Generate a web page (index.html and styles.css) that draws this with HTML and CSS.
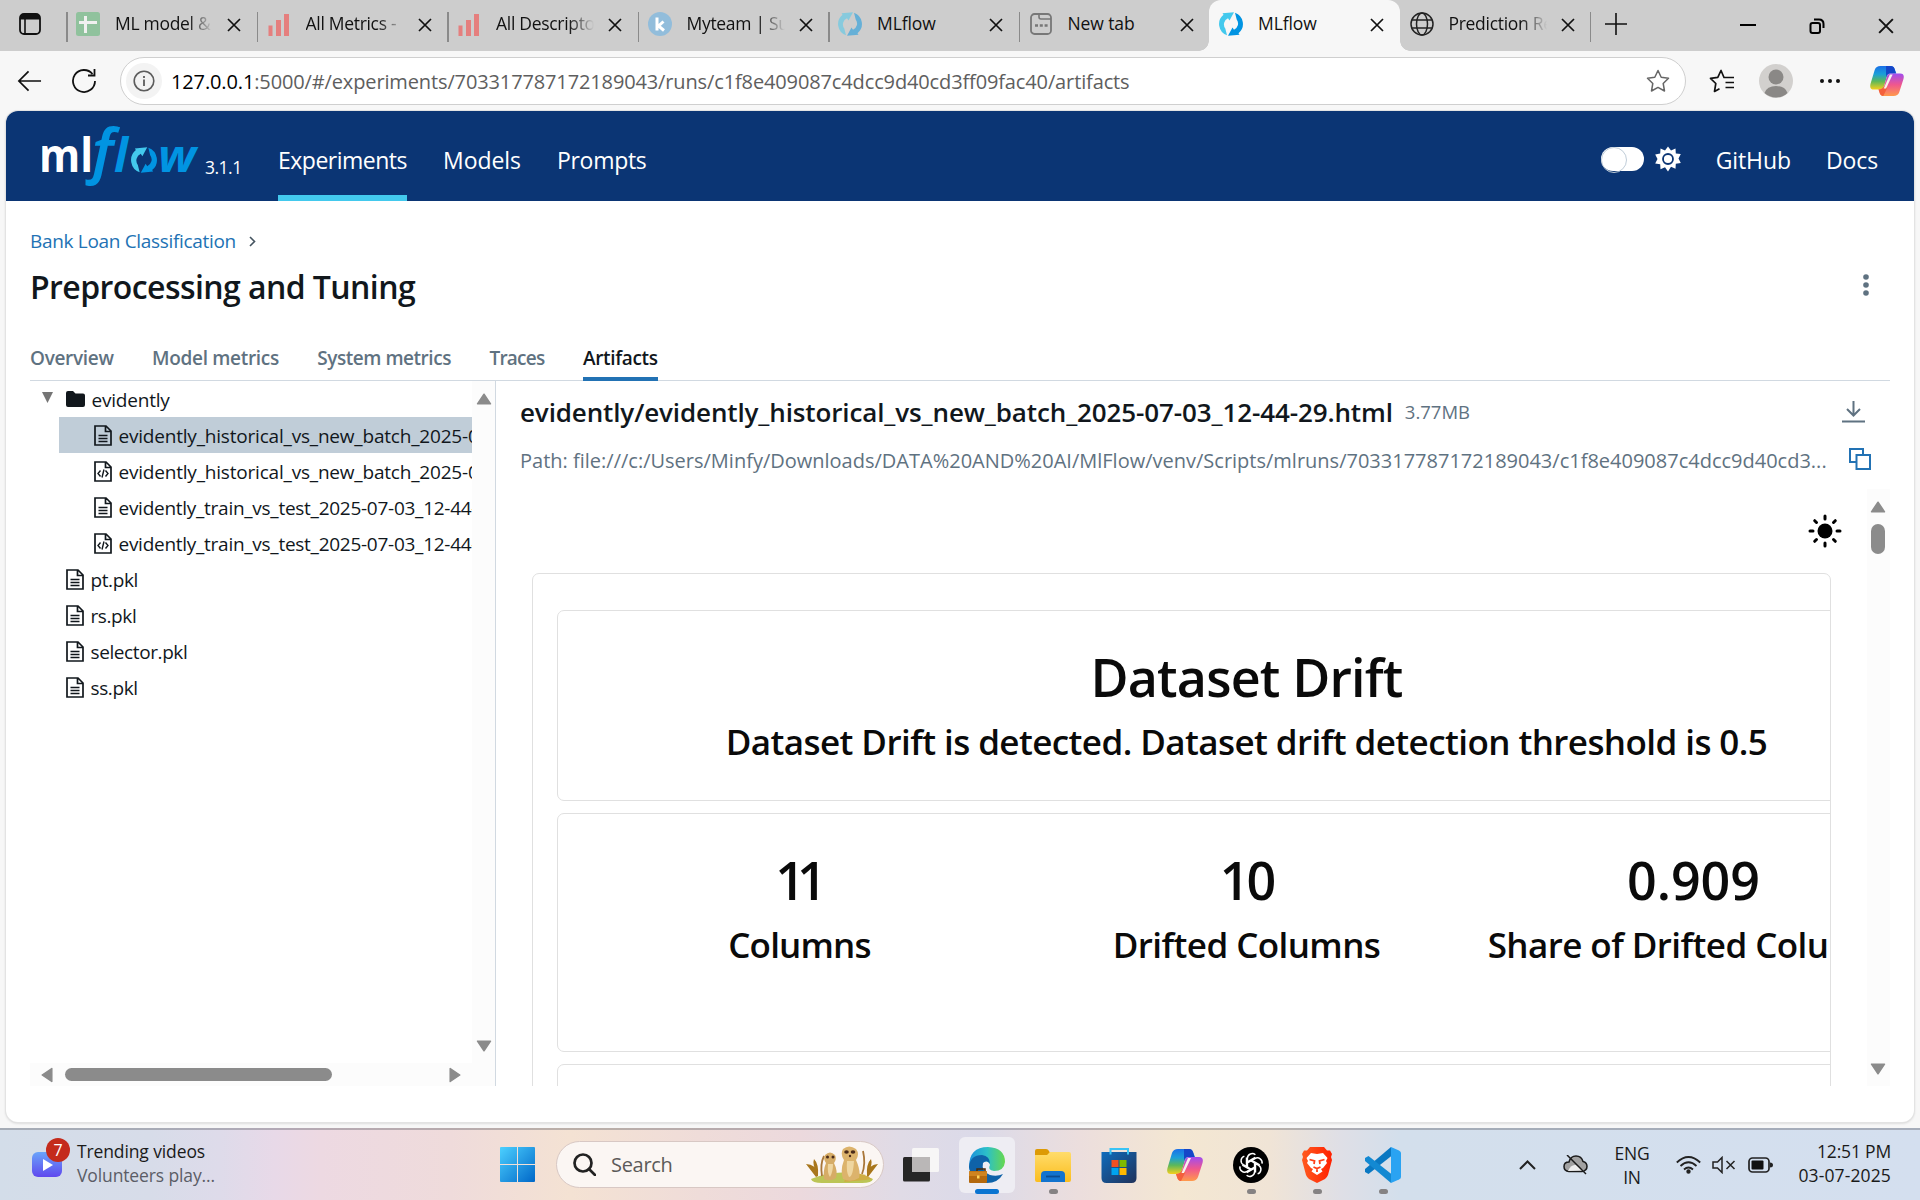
FILE: index.html
```html
<!DOCTYPE html>
<html lang="en">
<head>
<meta charset="utf-8">
<title>MLflow</title>
<link rel="stylesheet" href="styles.css">
</head>
<body>
<svg class="defs" width="0" height="0">
  <defs>
    <linearGradient id="g-cop1" x1="0" y1="0" x2="0" y2="1"><stop offset="0" stop-color="#1a6fe8"/><stop offset=".35" stop-color="#1b9fd8"/><stop offset=".65" stop-color="#5cb85a"/><stop offset="1" stop-color="#f5cf1c"/></linearGradient>
    <linearGradient id="g-cop2" x1="0" y1="0" x2="0" y2="1"><stop offset="0" stop-color="#a04cf0"/><stop offset=".5" stop-color="#f0578d"/><stop offset="1" stop-color="#ff9a4a"/></linearGradient>
    <linearGradient id="g-win" x1="0" y1="0" x2="1" y2="1"><stop offset="0" stop-color="#4cd0ff"/><stop offset="1" stop-color="#0067c8"/></linearGradient>
    <linearGradient id="g-fold" x1="0" y1="0" x2="0" y2="1"><stop offset="0" stop-color="#ffdc6b"/><stop offset="1" stop-color="#fbbd1e"/></linearGradient>
    <linearGradient id="g-edge" x1="0" y1="0" x2="1" y2="0"><stop offset="0" stop-color="#1b8fdc"/><stop offset=".5" stop-color="#2cc0c8"/><stop offset="1" stop-color="#66d84e"/></linearGradient>
    <linearGradient id="g-store" x1="0" y1="0" x2="1" y2="1"><stop offset="0" stop-color="#0f6cbd"/><stop offset="1" stop-color="#20325a"/></linearGradient>
    <linearGradient id="g-vid" x1="0" y1="0" x2="0" y2="1"><stop offset="0" stop-color="#6aa4fa"/><stop offset="1" stop-color="#5f48ee"/></linearGradient>
    <linearGradient id="g-brave" x1="0" y1="0" x2="1" y2="0"><stop offset="0" stop-color="#ff5a1f"/><stop offset="1" stop-color="#ff2000"/></linearGradient>
    <symbol id="x" viewBox="0 0 14 14"><path d="M1 1L13 13M13 1L1 13" stroke="#111" stroke-width="1.7" fill="none"/></symbol>
    <symbol id="bars" viewBox="0 0 24 24"><path d="M1.500 13.500h4V24h-4zM9 8h5v16H9zM17 2h5v22h-5z" fill="#e57f7e"/></symbol>
    <symbol id="ring" viewBox="0 0 24 24"><path d="M8 23.300A12 12 0 0 1 4.500 2.700L3.500 1.300L15 .2L10.500 8.500L9 6.300A6.700 6.700 0 0 0 6.300 16.500z" fill="#43c9ed"/><path d="M16 .7A12 12 0 0 1 19.500 21.300L20.500 22.700L9 23.800L13.500 15.500L15 17.700A6.700 6.700 0 0 0 17.700 7.500z" fill="#0194e2"/></symbol>
    <symbol id="doc" viewBox="0 0 18 21"><path d="M1 1h11l5 5v14H1zM11.500 1v5.500H17" fill="none" stroke="#11171c" stroke-width="1.700"/><path d="M4.500 10.500h9M4.500 13.500h9M4.500 16.500h9" stroke="#11171c" stroke-width="1.500"/></symbol>
    <symbol id="code" viewBox="0 0 18 21"><path d="M1 1h11l5 5v14H1zM11.500 1v5.500H17" fill="none" stroke="#11171c" stroke-width="1.700"/><path d="M6.500 9.500L4 12.500L6.500 15.500M11.500 9.500L14 12.500L11.500 15.500M10 8.500L8 16.500" fill="none" stroke="#11171c" stroke-width="1.400"/></symbol>
    <symbol id="tri" viewBox="0 0 16 12"><path d="M8 1.200L14.500 10.800H1.500z" fill="#8b8b8b" stroke="#8b8b8b" stroke-width="1.500" stroke-linejoin="round"/></symbol>
    <symbol id="copilot" viewBox="0 0 36 34"><path d="M11 1H22Q25 1 26 4L28 9H21Q19 9 18 12L15 22Q13.500 26 10 26H4Q-1 26 .5 20L5 5Q6.500 1 11 1z" fill="url(#g-cop1)"/><path d="M17 1H22Q25 1 26 4L27.500 9H21Q18 9 17 13z" fill="#1546c8"/><path d="M25 33H14Q11 33 10 29L9 26Q13.500 26 15 22L18 12Q19 9 22 9H32Q37 9 35.500 15L31 29Q29.500 33 25 33z" fill="url(#g-cop2)"/><path d="M9 26Q13.500 26 15 22L18.500 24L14 33Q11 33 10 29z" fill="#f4603c"/><path d="M21 10h3L17 25h-2.500z" fill="#f8f2ef"/></symbol>
  </defs>
</svg>

<header class="tabstrip">
  <div class="workspaces"><svg width="22" height="22" viewBox="0 0 22 22"><rect x="1" y="1" width="20" height="20" rx="4" fill="none" stroke="#111" stroke-width="1.800"/><path d="M1 6.500V5Q1 1 5 1H17Q21 1 21 5V6.500z" fill="#111"/><path d="M6 6v15" stroke="#111" stroke-width="1.600"/></svg></div>
  <div class="tab"><svg class="fav" viewBox="0 0 24 24"><rect width="24" height="24" rx="2.500" fill="#90c29d"/><path d="M9.500 4v17M3 10.500h18" stroke="#f0f0f0" stroke-width="3"/></svg><span class="tt">ML model &amp;</span><svg class="x"><use href="#x"/></svg></div>
  <div class="tab"><svg class="fav"><use href="#bars"/></svg><span class="tt">All Metrics -</span><svg class="x"><use href="#x"/></svg></div>
  <div class="tab"><svg class="fav"><use href="#bars"/></svg><span class="tt">All Descripto</span><svg class="x"><use href="#x"/></svg></div>
  <div class="tab"><svg class="fav" viewBox="0 0 24 24"><circle cx="12" cy="12" r="12" fill="#92bddb"/><path d="M9 5.500v13M15.500 9.500l-5 4.500l5.500 4.500" stroke="#fff" stroke-width="3" fill="none"/></svg><span class="tt">Myteam | Su</span><svg class="x"><use href="#x"/></svg></div>
  <div class="tab"><svg class="fav dim"><use href="#ring"/></svg><span class="tt full">MLflow</span><svg class="x"><use href="#x"/></svg></div>
  <div class="tab"><svg class="fav" viewBox="0 0 24 24"><rect x="2" y="2" width="20" height="20" rx="3.500" fill="none" stroke="#777" stroke-width="1.800"/><path d="M10 2v3q0 2 2 2h10" fill="none" stroke="#777" stroke-width="1.600"/><path d="M6 13.500h3M10.800 13.500h3M15.600 13.500h3" stroke="#777" stroke-width="2.500"/></svg><span class="tt full">New tab</span><svg class="x"><use href="#x"/></svg></div>
  <div class="tab active"><svg class="fav"><use href="#ring"/></svg><span class="tt full">MLflow</span><svg class="x"><use href="#x"/></svg></div>
  <div class="tab after"><svg class="fav" viewBox="0 0 24 24" fill="none" stroke="#222" stroke-width="1.500"><circle cx="12" cy="12" r="11"/><ellipse cx="12" cy="12" rx="5.500" ry="11"/><path d="M2 8h20M2 16h20"/></svg><span class="tt">Prediction Re</span><svg class="x"><use href="#x"/></svg></div>
  <div class="newtab"><svg width="22" height="22" viewBox="0 0 22 22"><path d="M11 0v22M0 11h22" stroke="#111" stroke-width="1.600"/></svg></div>
  <div class="wincontrols">
    <svg width="16" height="16" viewBox="0 0 16 16"><path d="M0 7h16" stroke="#000" stroke-width="2"/></svg>
    <svg width="16" height="16" viewBox="0 0 16 16" fill="none" stroke="#000" stroke-width="2"><rect x="1.500" y="5" width="9.500" height="10" rx="2"/><path d="M5 1.500h5q4.500 0 4.500 4.500v4"/></svg>
    <svg width="16" height="16" viewBox="0 0 14 14"><use href="#x"/></svg>
  </div>
</header>

<nav class="toolbar">
  <svg class="back" width="25" height="22" viewBox="0 0 26 22" fill="none" stroke="#111" stroke-width="1.800"><path d="M25 11H2M12 1L2 11l10 10"/></svg>
  <svg class="reload" width="26" height="26" viewBox="0 0 26 26" fill="none" stroke="#111" stroke-width="1.800"><path d="M21.500 6A11 11 0 1 0 24 13M23.500 1v6.500H17"/></svg>
  <div class="address">
    <span class="info"><svg width="22" height="22" viewBox="0 0 22 22"><circle cx="11" cy="11" r="9.800" fill="none" stroke="#5c5c5c" stroke-width="1.600"/><path d="M11 9.500v6.500M11 6v2" stroke="#5c5c5c" stroke-width="1.800"/></svg></span>
    <span class="url"><b>127.0.0.1</b>:5000/#/experiments/703317787172189043/runs/c1f8e409087c4dcc9d40cd3ff09fac40/artifacts</span>
    <svg class="star" width="24" height="24" viewBox="0 0 24 24"><path d="M12 1.500l3.200 6.800l7.300 1l-5.300 5.200l1.300 7.500L12 18.400L5.500 22l1.300-7.500L1.500 9.300l7.300-1z" fill="none" stroke="#666" stroke-width="1.500" stroke-linejoin="round"/></svg>
  </div>
  <svg class="favs" width="25" height="24" viewBox="0 0 25 24" fill="none" stroke="#111" stroke-width="1.700" stroke-linejoin="round"><path d="M17 8.500h-2L12 1.500L8.800 8.300l-7.300 1l5.300 5.200L5.500 22.500l5-2.700M14.500 8.500H25M16.500 13.500H25M16.500 18.500H25"/></svg>
  <svg class="avatar" width="34" height="34" viewBox="0 0 34 34"><circle cx="17" cy="17" r="17" fill="#d2d0ce"/><circle cx="17" cy="13" r="7.500" fill="#8a8886"/><path d="M5.500 29Q8 22 17 22T28.500 29A17 17 0 0 1 5.500 29z" fill="#8a8886"/></svg>
  <svg class="more" width="20" height="4" viewBox="0 0 20 4" fill="#111"><circle cx="2" cy="2" r="2"/><circle cx="10" cy="2" r="2"/><circle cx="18" cy="2" r="2"/></svg>
  <svg class="cop" width="34" height="32"><use href="#copilot"/></svg>
</nav>

<main class="page">
  <header class="appbar">
    <svg class="logo" width="158" height="64" viewBox="0 0 158 64">
      <text x="-3" y="49" class="lg-ml" textLength="54" lengthAdjust="spacingAndGlyphs">ml</text>
      <text x="50" y="49" class="lg-f">f</text>
      <text x="72" y="49" class="lg-l">l</text>
      <text x="116" y="49" class="lg-w" textLength="38" lengthAdjust="spacingAndGlyphs">w</text>
      <svg x="89" y="24" width="26" height="26"><use href="#ring"/></svg>
    </svg>
    <span class="version">3.1.1</span>
    <a class="nav on">Experiments</a><a class="nav n2">Models</a><a class="nav n3">Prompts</a>
    <span class="switch"></span>
    <svg class="gear" width="26" height="26" viewBox="0 0 26 26"><path d="M13 .5l3 4l4.500-2l.3 5l5 .5l-2.300 4.500l2.300 4.500l-5 .8l-.3 5l-4.500-2L13 25.500l-3-4.200l-4.500 2l-.3-5l-5-.8L2.500 13L.2 8.500l5-1l.3-5l4.500 2z" fill="#fff"/><circle cx="13" cy="13" r="5" fill="none" stroke="#0b3574" stroke-width="1.800"/></svg>
    <a class="nav r">GitHub</a><a class="nav r">Docs</a>
  </header>

  <div class="crumb"><a>Bank Loan Classification</a><svg width="7" height="11" viewBox="0 0 7 11"><path d="M1 1l4.500 4.500L1 10" fill="none" stroke="#44535f" stroke-width="1.600"/></svg></div>
  <div class="titlebar"><h1>Preprocessing and Tuning</h1>
    <svg width="6" height="22" viewBox="0 0 6 22" fill="#5f7281"><circle cx="3" cy="3" r="2.800"/><circle cx="3" cy="11" r="2.800"/><circle cx="3" cy="19" r="2.800"/></svg></div>
  <div class="tabs"><a>Overview</a><a>Model metrics</a><a class="sys">System metrics</a><a class="tr">Traces</a><a class="on">Artifacts</a></div>

  <div class="split">
    <aside class="tree">
      <div class="rows">
        <div class="row folder"><svg width="11" height="11" viewBox="0 0 11 11"><path d="M0 0h11L5.500 11z" fill="#757575"/></svg><svg class="fi" width="19" height="16" viewBox="0 0 19 16"><path d="M2 0h5l2.500 2.500H17q2 0 2 2V14q0 2-2 2H2q-2 0-2-2V2q0-2 2-2z" fill="#11171c"/></svg><span>evidently</span></div>
        <div class="row kid sel"><svg><use href="#doc"/></svg><span>evidently_historical_vs_new_batch_2025-07-03_12-44-29.html</span></div>
        <div class="row kid"><svg><use href="#code"/></svg><span>evidently_historical_vs_new_batch_2025-07-03_12-44-29.json</span></div>
        <div class="row kid t"><svg><use href="#doc"/></svg><span>evidently_train_vs_test_2025-07-03_12-44-29.html</span></div>
        <div class="row kid t"><svg><use href="#code"/></svg><span>evidently_train_vs_test_2025-07-03_12-44-29.json</span></div>
        <div class="row p"><svg><use href="#doc"/></svg><span>pt.pkl</span></div>
        <div class="row p"><svg><use href="#doc"/></svg><span>rs.pkl</span></div>
        <div class="row p"><svg><use href="#doc"/></svg><span>selector.pkl</span></div>
        <div class="row p"><svg><use href="#doc"/></svg><span>ss.pkl</span></div>
      </div>
      <div class="vbar"><svg><use href="#tri"/></svg><svg class="down"><use href="#tri"/></svg></div>
      <div class="hbar"><svg class="left"><use href="#tri"/></svg><i></i><svg class="right"><use href="#tri"/></svg></div>
    </aside>

    <section class="viewer">
      <div class="vhead"><h2>evidently/evidently_historical_vs_new_batch_2025-07-03_12-44-29.html</h2><span class="size">3.77MB</span>
        <svg width="23" height="22" viewBox="0 0 23 22" fill="none" stroke="#5f7281" stroke-width="2"><path d="M11.500 0v14M5 8l6.500 6.500L18 8M0 20.500h23"/></svg></div>
      <div class="vpath"><span>Path: file:///c:/Users/Minfy/Downloads/DATA%20AND%20AI/MlFlow/venv/Scripts/mlruns/703317787172189043/c1f8e409087c4dcc9d40cd3...</span>
        <svg width="22" height="22" viewBox="0 0 22 22" fill="none" stroke="#2272b4" stroke-width="2"><path d="M7 14H1V1h13v5"/><rect x="7.500" y="7" width="13.500" height="14"/></svg></div>
      <div class="frame">
        <div class="report">
          <svg class="sun" width="34" height="34" viewBox="0 0 34 34"><circle cx="17" cy="17" r="7.500" fill="#000"/><path d="M17 2v3M17 29v3M2 17h3M29 17h3M6.700 6.700l1.800 1.800M25.500 25.500l1.800 1.800M27.300 6.700l-1.800 1.800M8.500 25.500l-1.800 1.800" stroke="#000" stroke-width="3" stroke-linecap="round"/></svg>
          <div class="outer">
            <div class="card c1"><div class="big">Dataset Drift</div><div class="sub">Dataset Drift is detected. Dataset drift detection threshold is 0.5</div></div>
            <div class="card c2">
              <div><div class="big eleven">11</div><div class="sub cols">Columns</div></div>
              <div><div class="big ten">10</div><div class="sub">Drifted Columns</div></div>
              <div><div class="big num">0.909</div><div class="sub">Share of Drifted Columns</div></div>
            </div>
            <div class="card c3"></div>
          </div>
        </div>
        <div class="fbar"><svg><use href="#tri"/></svg><i></i><svg class="down"><use href="#tri"/></svg></div>
      </div>
    </section>
  </div>
</main>

<footer class="taskbar">
  <div class="widget"><svg width="40" height="52" viewBox="0 0 40 52"><rect x="0" y="19" width="30" height="25" rx="6" fill="url(#g-vid)"/><path d="M11 26v12l10-6z" fill="#fff"/><circle cx="26" cy="17" r="12" fill="#c42b1c"/><text x="26" y="23" class="badge">7</text></svg>
    <div><div class="w1">Trending videos</div><div class="w2">Volunteers play...</div></div></div>
  <svg class="win" width="35" height="35" viewBox="0 0 35 35"><path d="M0 1q0-1 1-1H17V17H0zM18 0H34q1 0 1 1V17H18zM0 18H17V35H1q-1 0-1-1zM18 18H35V34q0 1-1 1H18z" fill="url(#g-win)"/></svg>
  <div class="search"><svg width="23" height="23" viewBox="0 0 23 23" fill="none" stroke="#222" stroke-width="2.700"><circle cx="10" cy="10" r="8.500"/><path d="M16 16l6 6" stroke-linecap="round"/></svg><span>Search</span>
    <svg class="meer" width="72" height="38" viewBox="0 0 72 38"><path d="M5 33Q36 20 67 33Q66 37 56 37H16Q6 37 5 33z" fill="#bcc556"/><path d="M38 36Q60 34 66 33Q58 26 42 27z" fill="#cfae45"/><path d="M16 30Q14 18 18 10M56 28Q60 18 57 5" stroke="#a9773a" stroke-width="1.800" fill="none"/><path d="M18 33Q17 24 20 17Q17 13 19 9Q24 4 29 9Q31 13 28 17Q32 25 30 32Q24 36 18 33z" fill="#d6ac66"/><path d="M37 33Q34 24 38 14Q34 8 37 3Q43 -2 50 3Q54 8 50 14Q55 25 53 32Q45 37 37 33z" fill="#dcb36c"/><path d="M41 15Q40 26 43 31Q47 31 48 15zM22 18Q21 27 24 31Q27 26 27 18z" fill="#efd6a0"/><g fill="#4a2b1a"><ellipse cx="40.500" cy="6" rx="2.300" ry="1.700"/><ellipse cx="47" cy="6" rx="2.300" ry="1.700"/><circle cx="21.500" cy="11" r="1.500"/><circle cx="27" cy="11" r="1.500"/><circle cx="44" cy="10" r="1.200"/></g><path d="M10 31L0 18Q10 18 11 28Q6 18 8 13Q13 18 12 30M62 31L72 18Q63 18 62 28Q67 18 65 13Q60 18 61 30" fill="#a8761c"/></svg></div>
  <svg class="tv" width="36" height="34" viewBox="0 0 36 34"><rect y="9" width="27" height="24.500" rx="1.500" fill="#262626"/><rect x="9" y="0" width="27" height="24" rx="1.500" fill="#f7f6f6"/><rect x="9" y="9" width="18" height="15" fill="#bab7b7"/></svg>
  <div class="app edge"><svg width="36" height="36" viewBox="0 0 36 36"><path d="M0 20Q0 0 19 0Q36 1 36 15Q35 24 25 24Q18 23 21 18Q20 13 14 15Q8 20 18 29L18 36Q2 34 0 20z" fill="url(#g-edge)"/><path d="M0 20Q1 8 13 8Q21 9 21 17Q18 12 14 16Q12 24 21 28Q28 30 34 27Q29 36 18 36Q2 34 0 20z" fill="#0f62a8"/><path d="M8 24V22h8v2" stroke="#4a2a08" stroke-width="1.500" fill="none"/><rect y="24" width="18" height="12" rx="1" fill="#b4690e"/><path d="M0 24.500h18v4.500H0z" fill="#cf8420"/><rect x="8" y="28.500" width="2.500" height="3" fill="#ffd45a"/></svg><i class="wide"></i></div>
  <div class="app"><svg width="36" height="36" viewBox="0 0 36 36"><path d="M0 4q0-2 2-2h9q2 0 3 2l2 4H0z" fill="#dd9a05"/><path d="M0 8h12l3-3H34q2 0 2 2V33q0 2-2 2H2q-2 0-2-2z" fill="url(#g-fold)"/><path d="M6 35V28q0-4 4-4H26q4 0 4 4v7z" fill="#1273ce"/><path d="M11 29.500h14" stroke="#0b4c91" stroke-width="1.800"/></svg><i></i></div>
  <div class="app"><svg width="36" height="36" viewBox="0 0 36 36"><path d="M9.500 7V2H27v5" fill="none" stroke="#38c3f5" stroke-width="2"/><path d="M.5 5H35.500V31q0 5-5 5H5.500q-5 0-5-5z" fill="url(#g-store)"/><path d="M9.500 5v2.500M27 5v2.500" stroke="#38c3f5" stroke-width="2"/><path d="M10.500 13h7v7h-7z" fill="#f25022"/><path d="M18.500 13h7v7h-7z" fill="#7fba00"/><path d="M10.500 21h7v7h-7z" fill="#00a4ef"/><path d="M18.500 21h7v7h-7z" fill="#ffb900"/></svg></div>
  <div class="app"><svg width="36" height="34"><use href="#copilot"/></svg></div>
  <div class="app"><svg width="36" height="36" viewBox="0 0 36 36"><circle cx="18" cy="18" r="18" fill="#000"/><g transform="translate(18 18)" fill="none" stroke="#fff" stroke-width="1.500"><path id="pt" d="M-3.600 2.100V-6.800A4.800 4.800 0 0 1 4.400 -10.200M4.200 -7.600L-3.600 -3.100"/><use href="#pt" transform="rotate(60)"/><use href="#pt" transform="rotate(120)"/><use href="#pt" transform="rotate(180)"/><use href="#pt" transform="rotate(240)"/><use href="#pt" transform="rotate(300)"/></g></svg><i></i></div>
  <div class="app"><svg width="36" height="36" viewBox="0 0 36 36"><path d="M11 0h14l3 3.500h3l2 3.500l-1 3l1 3l-4 15q-1 2.500-3 4l-8 4l-8-4q-2-1.500-3-4L3 13l1-3l-1-3l2-3.500h3z" fill="url(#g-brave)"/><path d="M12 6l6 1l6-1l4.500 5l-1.500 3l1 2l-4 5l-2 1l1.500 2.500L18 28l-5.500-3.500L14 22l-2-1l-4-5l1-2l-1.500-3z" fill="#fff"/><path d="M10.500 12.500l5 1.500l-.5 3M25.500 12.500l-5 1.500l.5 3M14.500 20l3.500 1.500l3.500-1.500M18 21.500V25" stroke="#ff4018" stroke-width="1.800" fill="none"/></svg><i></i></div>
  <div class="app"><svg width="36" height="36" viewBox="0 0 36 36"><path d="M27 8.500L3.500 27L0 25V22L26 0z" fill="#0a78c2"/><path d="M27 27.500L3.500 9L0 11V14L26 36z" fill="#1389d2"/><path d="M26 0L34 3.500q2 1 2 2.500V30q0 1.500-2 2.500L26 36z" fill="#2aa3f2"/></svg><i></i></div>
  <div class="tray">
    <svg class="chev" width="17" height="10" viewBox="0 0 17 10"><path d="M1 9l7.500-7.500L16 9" fill="none" stroke="#222" stroke-width="2"/></svg>
    <svg class="cloud" width="25" height="20" viewBox="0 0 25 20"><path d="M6 16.500Q1 16 1 11.500T6 7Q7.500 1 13 1T20 6.500Q24 7.500 24 11.500T19 16.500z" fill="#a2a2a2" stroke="#1a1a1a" stroke-width="1.500"/><path d="M5 16Q8 9 13 10L21 15.500z" fill="#eee"/><path d="M4 0L23 19" stroke="#1a1a1a" stroke-width="1.500"/></svg>
    <div class="lang"><div>ENG</div><div>IN</div></div>
    <svg class="wifi" width="25" height="18" viewBox="0 0 25 18" fill="none" stroke="#222" stroke-width="1.800"><path d="M.8 6.500Q12.500-4.500 24.200 6.500M4.500 10Q12.500 2.500 20.500 10M8 13.500Q12.500 9.500 17 13.500"/><circle cx="12.500" cy="15.500" r="1.300" fill="#222"/></svg>
    <svg class="vol" width="24" height="18" viewBox="0 0 24 18" fill="none" stroke="#222" stroke-width="1.500"><path d="M1 6h4.500L10 1.500v15L5.500 12H1zM14.500 5l8 8M22.500 5l-8 8"/></svg>
    <svg class="bat" width="25" height="16" viewBox="0 0 25 16"><rect x="1" y="1" width="20" height="14" rx="3.500" fill="none" stroke="#222" stroke-width="1.700"/><rect x="3.500" y="3.500" width="12" height="9" rx="1" fill="#111"/><path d="M22 5.500q3 0 3 2.500t-3 2.500z" fill="#222"/></svg>
    <div class="clock"><div>12:51 PM</div><div class="date">03-07-2025</div></div>
  </div>
</footer>
</body>
</html>
```
FILE: styles.css
```css
* { box-sizing: border-box; }
body { margin: 0; width: 1920px; height: 1200px; overflow: hidden; display: flex; flex-direction: column; background: #f7f7f7; font-family: "Open Sans", "Noto Sans", sans-serif; color: #11171c; }
svg { display: block; flex: none; }
h1, h2 { margin: 0; }
.defs { position: absolute; }

/* browser tabs */
.tabstrip { flex: none; height: 51px; background: #cdcdcd; display: flex; }
.workspaces { width: 66px; padding: 13px 0 0 19px; }
.tab { width: 190.5px; height: 51px; display: flex; align-items: center; padding: 0 0 4px 10px; position: relative; }
.tab::before { content: ""; position: absolute; left: 0; top: 12px; width: 1.5px; height: 30px; background: #8a8a8a; }
.tab.active { background: #f7f7f7; border-radius: 12px 12px 0 0; }
.tab.active::before, .tab.after::before { display: none; }
.tab.active::before { display: block; left: -10px; top: auto; bottom: 0; width: 10px; height: 10px; background: radial-gradient(circle at 0 0, transparent 9.5px, #f7f7f7 10px); }
.tab.active::after { content: ""; position: absolute; right: -10px; bottom: 0; width: 10px; height: 10px; background: radial-gradient(circle at 100% 0, transparent 9.5px, #f7f7f7 10px); }
.fav { width: 24px; height: 24px; }
.fav.dim { opacity: .5; }
.tt { width: 98px; margin: 0 14px 0 15px; padding-bottom: 1px; font-size: 17.5px; line-height: 24px; letter-spacing: -.3px; white-space: nowrap; overflow: hidden; color: #111; mask-image: linear-gradient(90deg, #000 74%, transparent); }
.tt.full { mask-image: none; letter-spacing: -.1px; }
.x { width: 14px; height: 14px; margin-top: 3px; }
.newtab { border-left: 1.500px solid #8a8a8a; height: 30px; margin-top: 12px; padding: 1px 0 0 14px; width: 150px; }
.wincontrols { display: flex; gap: 53px; padding-top: 18px; }

/* address row */
.toolbar { flex: none; height: 60px; display: flex; align-items: center; padding: 0 16px 0 17px; }
.reload { margin-left: 28.500px; }
.address { margin-left: 23.500px; width: 1566px; height: 48px; border: 1.500px solid #cfcfcf; border-radius: 24px; background: #fff; display: flex; align-items: center; padding-left: 5px; }
.info { width: 36px; height: 36px; border-radius: 50%; background: #f3f3f3; display: grid; place-items: center; }
.url { margin-left: 9px; font-size: 20px; line-height: 28px; letter-spacing: -.13px; padding-top: 1px; color: #5e5e5e; white-space: nowrap; }
.url b { font-weight: 400; color: #000; }
.star { margin-left: auto; margin-right: 15px; }
.favs { margin-left: 23px; }
.avatar { margin-left: 25px; }
.more { margin-left: 27px; }
.cop { margin-left: 30px; }

/* page */
.page { flex: none; margin: 0 6px; height: 1011px; background: #fff; border-radius: 12px; overflow: hidden; box-shadow: 0 0 0 1px #e3e3e3, 0 1px 3px rgba(0,0,0,.2); }
.appbar { height: 90px; background: #0b3574; color: #fff; display: flex; padding-left: 36px; }
.logo { margin-top: 12px; }
.lg-ml { font: 700 47px "Open Sans"; fill: #fff; }
.lg-f { font: italic 600 60px "Noto Sans"; fill: #0194e2; }
.lg-l { font: italic 700 47px "Open Sans"; fill: #0194e2; }
.lg-w { font: italic 700 45px "Open Sans"; fill: #0194e2; }
.version { margin-left: 5px; width: 37px; font-size: 17.5px; line-height: 24px; letter-spacing: -.5px; padding-top: 44px; }
.nav { font-size: 23px; line-height: 32px; padding-top: 33px; height: 90px; margin-left: 36px; white-space: nowrap; }
.nav.on { border-bottom: 6px solid #43c9ed; letter-spacing: -.5px; }
.n2 { letter-spacing: -.05px; }
.n3 { letter-spacing: -.3px; }
.switch { margin: 36px 0 0 auto; width: 43px; height: 24px; border-radius: 12px; background: #fff; position: relative; }
.switch::before { content: ""; position: absolute; left: 0; top: 0; width: 24px; height: 24px; border: 1px solid #c0cdd8; border-radius: 50%; }
.gear { margin: 35px 0 0 11px; }
.nav.r { letter-spacing: -.1px; margin-left: 35px; }
.nav.r:last-child { margin-right: 36px; }

.crumb { display: flex; align-items: center; gap: 13px; padding-left: 24px; margin-top: 26px; height: 28px; font-size: 19px; line-height: 28px; letter-spacing: -.32px; color: #2272b4; }
.titlebar { display: flex; align-items: center; justify-content: space-between; height: 44px; margin-top: 10px; padding: 0 45px 0 24px; }
.titlebar svg { margin-top: -4px; }
h1 { font-size: 32px; line-height: 44px; font-weight: 600; letter-spacing: -.57px; }
.tabs { margin: 34px 24px 0; height: 38px; border-bottom: 1px solid #d1d9e1; display: flex; gap: 38.500px; font-size: 19px; line-height: 30px; font-weight: 600; letter-spacing: -.32px; color: #5f7281; }
.sys { letter-spacing: -.47px; }
.tr { letter-spacing: -.77px; }
.tabs .on { color: #11171c; border-bottom: 4.500px solid #2272b4; height: 38px; }

.split { display: flex; margin: 0 24px; height: 705px; }
.tree { width: 466px; border-right: 1px solid #d1d9e1; display: grid; grid-template: 682px 23px / 442px 23px; }
.rows { grid-row: 1; grid-column: 1; overflow: hidden; font-size: 19px; line-height: 34px; letter-spacing: -.2px; }
.row { height: 36px; padding-left: 36px; display: flex; align-items: center; white-space: nowrap; }
.row span { padding-top: 2px; }
.row svg { width: 18px; height: 21px; margin-right: 6.500px; }
.row.folder { padding-left: 12px; }
.row.folder svg { width: 11px; height: 11px; margin: -4px 12.500px 0 0; }
.row.folder svg.fi { width: 19px; height: 16px; margin: 0 7px 0 0; }
.row.kid { margin-left: 29px; padding-left: 35px; }
.row.t { letter-spacing: -.27px; }
.row.p { letter-spacing: -.4px; }
.row.sel { background: #c0cdd8; }
.vbar { grid-row: 1; grid-column: 2; background: #fcfcfc; display: flex; flex-direction: column; justify-content: space-between; padding: 12px 4px 11px 3.500px; }
.vbar svg, .fbar svg { width: 16px; height: 12px; }
.down { transform: rotate(180deg); }
.hbar { grid-row: 2; grid-column: 1 / 3; background: #fcfcfc; display: flex; align-items: center; padding-left: 9px; }
.hbar svg { width: 16px; height: 12px; }
.left { transform: rotate(-90deg); }
.right { transform: rotate(90deg); margin-left: auto; margin-right: 32px; }
.hbar i { width: 267px; height: 13px; border-radius: 7px; background: #8b8b8b; margin-left: 10px; }

.viewer { flex: 1; min-width: 0; padding-left: 24px; }
.vhead { display: flex; align-items: center; height: 62px; padding-right: 25px; }
h2 { font-size: 26px; line-height: 36px; font-weight: 600; letter-spacing: -.12px; white-space: nowrap; }
.size { font-size: 18.5px; margin: -1px 0 0 12px; color: #5f7281; }
.vhead svg { margin-left: auto; }
.vpath { display: flex; align-items: center; height: 34px; font-size: 20px; line-height: 28px; color: #5f7281; white-space: nowrap; padding-right: 19px; justify-content: space-between; }
.vpath span { padding-top: 1px; }
.vpath svg { margin-top: -2px; }
.frame { display: flex; height: 597px; margin-top: 12px; overflow: hidden; }
.report { width: 1346.500px; padding-left: 12px; }
.sun { margin: 25px 0 25px 1276px; }
.outer { width: 1299px; height: 540px; border: 1.500px solid #e0e0e0; border-radius: 7px; padding: 36px 0 0 24px; overflow: hidden; }
.card { width: 1379px; border: 1.500px solid #e0e0e0; border-radius: 7px; margin-bottom: 12px; text-align: center; color: #0a0a0a; font-weight: 600; }
.c1 { height: 191px; padding-top: 30px; }
.c2 { height: 239px; display: flex; padding: 30px 18px 0; }
.c2 > div { flex: 1; white-space: nowrap; }
.c3 { height: 100px; }
.big { font-size: 52px; line-height: 74px; height: 78px; margin-top: -1px; letter-spacing: -.83px; }
.num { letter-spacing: 0; }
.ten { letter-spacing: -3px; }
.eleven { letter-spacing: -8px; text-indent: -5px; }
.sub { font-size: 35px; line-height: 48px; letter-spacing: -.58px; }
.cols { letter-spacing: -.8px; }
.fbar { width: 23px; background: #fcfcfc; display: flex; flex-direction: column; align-items: center; padding: 12px 0 11px; }
.fbar i { width: 14px; height: 30px; border-radius: 7px; background: #8b8b8b; margin-top: 11px; }
.fbar .down { margin-top: auto; }

/* taskbar */
.taskbar { flex: none; margin-top: 6px; height: 72px; border-top: 2px solid rgba(80,80,90,.35); display: flex; align-items: center; padding-bottom: 1px; background: linear-gradient(90deg, #d3dde9 0, #d7dce9 150px, #dedbea 220px, #e8d9e8 275px, #edd9e2 320px, #efdbdb 450px, #f4e2d3 570px, #efdcd9 700px, #ecd9dd 800px, #e0dbe6 900px, #dbdae9 980px, #ecdedd 1080px, #f4e7d2 1180px, #f0e4d6 1270px, #dfdfe6 1340px, #d3dfec 1400px, #d4dfef 1920px) border-box; }
.widget { width: 468px; margin-left: 32px; display: flex; align-items: center; font-size: 17.5px; line-height: 24px; }
.widget svg { margin-top: -12px; }
.widget > div { margin: -3px 0 0 5px; color: #1a1a1a; }
.badge { font-size: 16px; fill: #fff; text-anchor: middle; }
.w1 { letter-spacing: -.12px; }
.w2 { letter-spacing: -.12px; color: #5b5d66; }
.search { width: 328px; height: 47px; margin-left: 21px; border-radius: 24px; border: 1.500px solid #d8c8c4; background: #fbf6f3; display: flex; align-items: center; font-size: 20px; line-height: 28px; letter-spacing: -.3px; padding: 0 5px 0 16px; color: #5c5a59; }
.search span { margin-left: 15px; }
.meer { margin-left: auto; }
.tv { margin: 0 18px 0 19px; }
.app { width: 66px; height: 56px; position: relative; display: grid; place-items: center; }
.app.edge { width: 56px; background: #eeedf3; border-radius: 6px; margin: 0 5px 0 2px; }
.app i { position: absolute; left: 28.500px; bottom: -1px; width: 9px; height: 5px; border-radius: 3px; background: #858283; }
.app i.wide { left: 16px; width: 24px; background: #0a74d1; }
.tray { margin-left: auto; padding-right: 29px; display: flex; align-items: center; font-size: 17.5px; line-height: 24px; color: #1a1a1a; }
.cloud { margin-left: 27px; }
.lang { text-align: center; margin-left: 26px; width: 36px; letter-spacing: -.2px; }
.wifi { margin-left: 26px; }
.vol { margin-left: 11px; }
.bat { margin-left: 12px; }
.clock { text-align: right; width: 118px; letter-spacing: -.18px; margin-top: -3px; }
.date { letter-spacing: .12px; }
```
